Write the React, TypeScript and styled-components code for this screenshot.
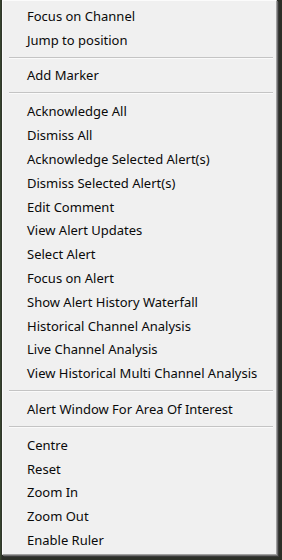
import React from "react";
import styled, { createGlobalStyle } from "styled-components";

const Global = createGlobalStyle`
  html, body { margin: 0; padding: 0; }
  body { background: #262a22; width: 282px; height: 560px; overflow: hidden; }
`;

const Backdrop = styled.div`
  width: 282px;
  height: 560px;
  box-sizing: border-box;
  padding: 0 5px 5px 2px;
  background: linear-gradient(90deg, #3b4a30 0px, #2c2f28 2px), #262a22;
`;

const Menu = styled.div`
  box-sizing: border-box;
  width: 275px;
  height: 555px;
  background: #f0f0f0;
  border-top: 1px solid #fbfbfb;
  border-left: 1px solid #fbfbfb;
  border-right: 1px solid #a0a0a0;
  border-bottom: 1px solid #a0a0a0;
  box-shadow: 1px 1px 0 #6d6d6d, 2px 2px 0 #3a3a3a;
  padding: 3px 2px 2px 2px;
  display: flex;
  flex-direction: column;
  font-family: "Noto Sans", "Open Sans", sans-serif;
  font-size: 13px;
  color: #0a0a0a;
`;

const Item = styled.div`
  height: 24px;
  display: flex;
  align-items: center;
  padding-left: 22px;
  white-space: nowrap;
`;

const Separator = styled.div`
  height: 12px;
  display: flex;
  align-items: center;
  padding: 0 1px 0 4px;
  &::after {
    content: "";
    flex: 1;
    height: 1px;
    background: #c4c4c4;
    border-bottom: 1px solid #fafafa;
  }
`;

type Entry = string | null;

const entries: Entry[] = [
  "Focus on Channel",
  "Jump to position",
  null,
  "Add Marker",
  null,
  "Acknowledge All",
  "Dismiss All",
  "Acknowledge Selected Alert(s)",
  "Dismiss Selected Alert(s)",
  "Edit Comment",
  "View Alert Updates",
  "Select Alert",
  "Focus on Alert",
  "Show Alert History Waterfall",
  "Historical Channel Analysis",
  "Live Channel Analysis",
  "View Historical Multi Channel Analysis",
  null,
  "Alert Window For Area Of Interest",
  null,
  "Centre",
  "Reset",
  "Zoom In",
  "Zoom Out",
  "Enable Ruler",
];

export default function App() {
  return (
    <>
      <Global />
      <Backdrop>
        <Menu>
          {entries.map((e, i) =>
            e === null ? <Separator key={i} /> : <Item key={i}>{e}</Item>
          )}
        </Menu>
      </Backdrop>
    </>
  );
}
